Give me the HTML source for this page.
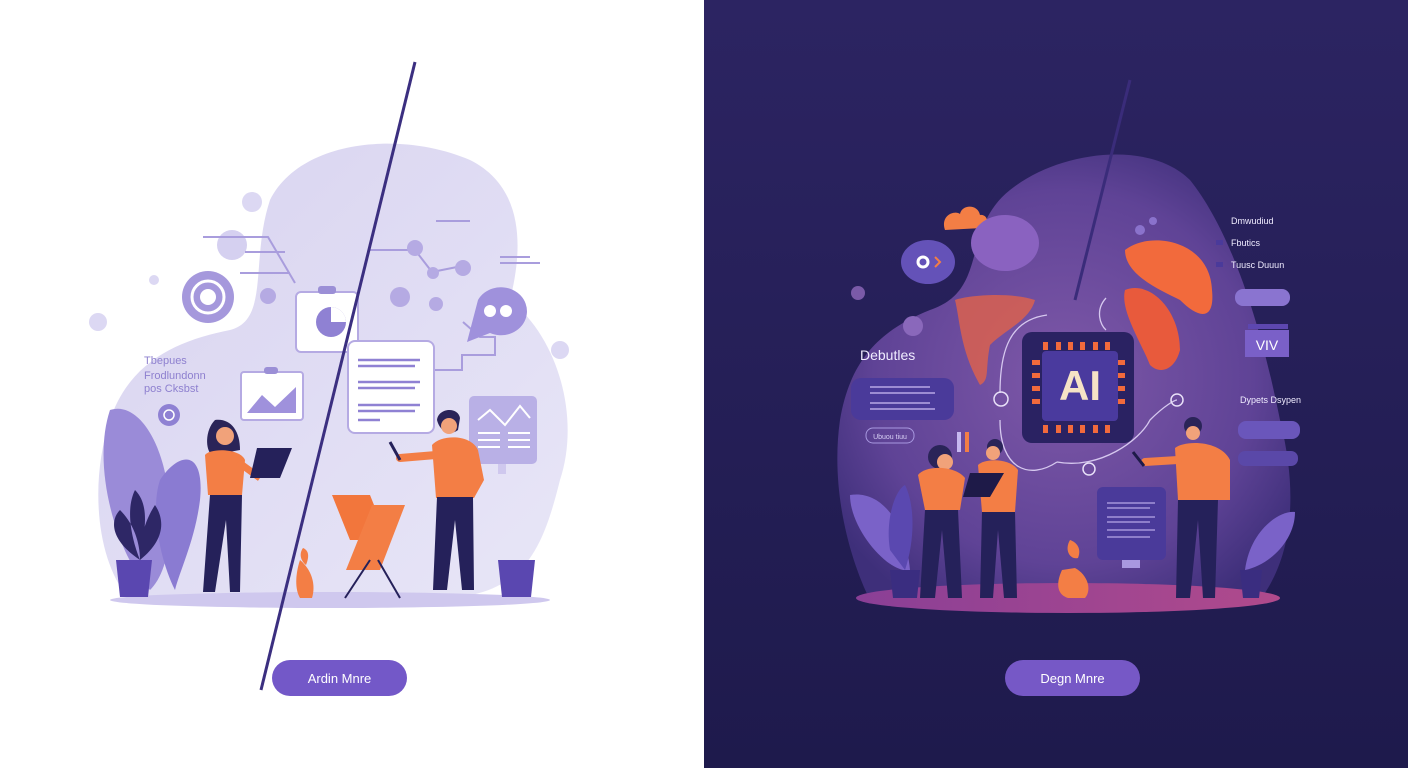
<!DOCTYPE html>
<html><head><meta charset="utf-8"><style>
html,body{margin:0;padding:0;width:1408px;height:768px;overflow:hidden;font-family:"Liberation Sans",sans-serif}
</style></head><body>
<svg width="1408" height="768" viewBox="0 0 1408 768" xmlns="http://www.w3.org/2000/svg" font-family="Liberation Sans, sans-serif">
<defs>
<linearGradient id="bgR" x1="0" y1="0" x2="0" y2="1"><stop offset="0" stop-color="#2c2462"/><stop offset="1" stop-color="#1e1a4c"/></linearGradient>
<radialGradient id="blobR" cx="0.5" cy="0.5" r="0.6"><stop offset="0" stop-color="#7e58a8"/><stop offset="0.7" stop-color="#5f4396"/><stop offset="1" stop-color="#3e2f7a"/></radialGradient>
<linearGradient id="blobL" x1="0" y1="0" x2="1" y2="1"><stop offset="0" stop-color="#d8d3f0"/><stop offset="1" stop-color="#e8e6f7"/></linearGradient>
<linearGradient id="floorR" x1="0" y1="0" x2="1" y2="0"><stop offset="0" stop-color="#8a3f96"/><stop offset="1" stop-color="#b04a8c"/></linearGradient>
</defs>
<rect width="704" height="768" fill="#ffffff"/>
<rect x="704" width="704" height="768" fill="url(#bgR)"/>

<!-- LEFT blob -->
<path d="M270 200 C300 140 400 130 470 160 C530 190 520 260 510 300 C560 340 580 420 560 480 C540 560 520 600 420 600 L130 600 C95 560 90 480 110 420 C130 360 180 340 230 330 C270 320 250 260 270 200 Z" fill="url(#blobL)"/>
<ellipse cx="330" cy="600" rx="220" ry="8" fill="#cfc8ee"/>
<circle cx="252" cy="202" r="10" fill="#dcd8f3"/><circle cx="98" cy="322" r="9" fill="#dcd8f3"/><circle cx="560" cy="350" r="9" fill="#dcd8f3"/><circle cx="154" cy="280" r="5" fill="#dcd8f3"/>
<circle cx="232" cy="245" r="15" fill="#d5d0f0"/>
<g stroke="#a99ddd" stroke-width="2" fill="none"><path d="M203 237 H268 L295 283"/><path d="M245 252 H285"/><path d="M240 273 H290"/><path d="M370 250 H415 L432 272 L462 266"/><path d="M436 221 H470"/><path d="M500 257 H530 M500 263 H540"/><path d="M463 322 L480 337 H495 V355 H462 V370 H435"/></g>
<circle cx="208" cy="297" r="26" fill="#a598dc"/><circle cx="208" cy="297" r="16" fill="none" stroke="#fff" stroke-width="3"/><circle cx="208" cy="297" r="8" fill="#fff"/>
<circle cx="268" cy="296" r="8" fill="#b5aae3"/>
<circle cx="415" cy="248" r="8" fill="#b5aae3"/><circle cx="433" cy="273" r="6" fill="#b5aae3"/><circle cx="463" cy="268" r="8" fill="#b5aae3"/><circle cx="400" cy="297" r="10" fill="#b5aae3"/><circle cx="436" cy="304" r="7" fill="#b5aae3"/>
<rect x="296" y="292" width="62" height="60" rx="5" fill="#fff" stroke="#b5aae3" stroke-width="2"/><rect x="318" y="286" width="18" height="8" rx="3" fill="#9b8fd6"/>
<circle cx="331" cy="322" r="15" fill="#8f81d3"/><path d="M331 322 V307 A15 15 0 0 1 346 322 Z" fill="#fff"/>
<path d="M478 300 A26 24 0 1 1 490 333 L467 342 Z" fill="#9f91dc"/><circle cx="490" cy="311" r="6" fill="#fff"/><circle cx="506" cy="311" r="6" fill="#fff"/>
<text x="144" y="364" font-size="11" fill="#8e80cf">Tbepues</text><text x="144" y="379" font-size="11" fill="#8e80cf">Frodlundonn</text><text x="144" y="392" font-size="11" fill="#8e80cf">pos Cksbst</text>
<circle cx="169" cy="415" r="11" fill="#8f81d3"/><circle cx="169" cy="415" r="5" fill="none" stroke="#fff" stroke-width="1.5"/>
<rect x="241" y="372" width="62" height="48" rx="3" fill="#fff" stroke="#b5aae3" stroke-width="2"/><rect x="264" y="367" width="14" height="7" rx="3" fill="#9b8fd6"/><path d="M247 413 L262 395 L275 407 L296 387 V413 Z" fill="#9f91dc"/>
<rect x="348" y="341" width="86" height="92" rx="7" fill="#fff" stroke="#b5aae3" stroke-width="2"/>
<g stroke="#8f81d3" stroke-width="2.5"><path d="M358 360 H420 M358 366 H415 M358 382 H420 M358 388 H415 M358 405 H420 M358 411 H415 M358 420 H380"/></g>
<rect x="469" y="396" width="68" height="68" rx="5" fill="#b9b0e6"/><path d="M478 420 L490 410 L505 425 L520 406 L530 418" stroke="#fff" fill="none" stroke-width="2"/><g stroke="#fff" stroke-width="2"><path d="M478 433 H500 M478 440 H500 M478 447 H500 M508 433 H530 M508 440 H530 M508 447 H530"/></g><rect x="498" y="464" width="8" height="10" fill="#cfc8ee"/>
<!-- plants left -->
<path d="M110 410 C140 400 170 450 170 520 C170 560 160 580 150 590 C120 560 90 470 110 410Z" fill="#9a8bd8"/>
<path d="M160 480 C180 450 205 450 200 500 C195 540 180 570 175 590 C160 560 150 510 160 480Z" fill="#8a7bd2"/>
<path d="M140 560 C110 540 110 520 120 510 C135 525 140 545 140 560Z M140 560 C145 530 150 505 135 490 C125 510 132 540 140 560Z M140 560 C165 540 165 520 155 505 C142 525 140 545 140 560Z" fill="#2e2766"/>
<path d="M116 560 H152 L148 597 H120 Z" fill="#5a47b0"/>
<path d="M498 560 H535 L531 597 H502 Z" fill="#5a47b0"/>
<!-- woman left -->
<path d="M215 420 C205 430 205 450 212 455 L240 450 C240 430 230 418 215 420Z" fill="#2a2458"/>
<circle cx="225" cy="436" r="9" fill="#f1a27a"/>
<path d="M205 455 C210 448 240 448 245 460 L242 495 H208 Z" fill="#f37e45"/>
<path d="M210 495 H242 L240 592 H230 L226 520 L215 592 H203 Z" fill="#25215a"/>
<path d="M238 462 L260 478" stroke="#f37e45" stroke-width="7"/>
<path d="M257 448 L292 448 L280 478 L250 478 Z" fill="#25215a"/>
<!-- man left -->
<path d="M437 420 C438 408 458 406 460 418 L458 430 C450 436 440 432 437 420Z" fill="#2a2458"/>
<circle cx="449" cy="426" r="8" fill="#f1a27a"/>
<path d="M432 445 C440 435 470 433 478 450 L484 480 L474 498 H436 Z" fill="#f37e45"/>
<path d="M436 455 L400 458" stroke="#f37e45" stroke-width="8" stroke-linecap="round"/>
<path d="M390 442 L400 460" stroke="#25215a" stroke-width="3"/>
<path d="M437 497 H473 L474 590 H462 L455 520 L447 590 H433 Z" fill="#25215a"/>
<!-- easel -->
<path d="M332 495 L370 495 L388 540 L350 540 Z" fill="#f2763c"/>
<path d="M372 505 L405 505 L380 570 L346 570 Z" fill="#f37e45"/>
<path d="M370 560 L345 598 M378 560 L400 598" stroke="#25215a" stroke-width="2"/>
<path d="M300 560 C295 575 295 590 300 598 H312 C316 585 312 570 300 560 Z" fill="#f37e45"/><path d="M303 548 C298 555 302 562 306 565 C310 555 308 550 303 548Z" fill="#f37e45"/>
<line x1="415" y1="62" x2="261" y2="690" stroke="#3b2f80" stroke-width="3"/>

<!-- RIGHT blob -->
<path d="M1010 190 C1060 150 1150 140 1190 180 C1230 230 1260 320 1280 420 C1300 500 1290 560 1260 600 L870 600 C850 560 830 490 840 420 C850 360 880 330 930 310 C990 290 960 230 1010 190 Z" fill="url(#blobR)"/>
<ellipse cx="1068" cy="598" rx="212" ry="15" fill="url(#floorR)"/>
<ellipse cx="928" cy="262" rx="27" ry="22" fill="#6452b8"/><circle cx="923" cy="262" r="5" fill="none" stroke="#fff" stroke-width="3"/><path d="M935 257 L940 262 L935 267" stroke="#f37e45" stroke-width="2" fill="none"/>
<path d="M945 230 C940 215 955 210 960 214 C962 204 978 204 980 215 C988 214 990 225 982 228 Z" fill="#f37e45"/>
<ellipse cx="1005" cy="243" rx="34" ry="28" fill="#8a62c0"/>
<circle cx="858" cy="293" r="7" fill="#7a5aa8"/><circle cx="913" cy="326" r="10" fill="#8a68bb"/><circle cx="1140" cy="230" r="5" fill="#8a72cc"/><circle cx="1153" cy="221" r="4" fill="#8a72cc"/>
<path d="M1125 250 C1150 230 1210 240 1212 290 C1215 320 1200 320 1180 300 C1160 290 1125 275 1125 250Z" fill="#f26a3c"/>
<path d="M1125 290 C1150 280 1180 310 1180 350 C1175 370 1160 375 1150 365 C1140 340 1120 310 1125 290Z" fill="#e85a3c"/>
<path d="M955 300 C970 295 1010 292 1035 300 C1030 320 1005 330 990 345 C985 370 990 380 980 385 C960 350 960 320 955 300Z" fill="#d9604f" opacity="0.85"/>
<g stroke="#d6c8ef" stroke-width="1.3" fill="none"><path d="M1047 315 C1010 320 1000 350 1000 393"/><path d="M1000 420 C1000 470 1030 480 1057 462"/><path d="M1057 462 C1100 470 1140 440 1150 420 C1165 405 1175 400 1177 400"/><path d="M1106 298 C1095 310 1100 325 1106 330"/></g>
<circle cx="1001" cy="399" r="7" fill="none" stroke="#e8e0f8" stroke-width="1.5"/><circle cx="1177" cy="400" r="6" fill="none" stroke="#e8e0f8" stroke-width="1.5"/><circle cx="1089" cy="469" r="6" fill="none" stroke="#e8e0f8" stroke-width="1.5"/>
<rect x="1022" y="332" width="112" height="111" rx="10" fill="#2a2262"/>
<g fill="#f26a3c"><rect x="1043" y="342" width="5" height="8"/><rect x="1056" y="342" width="5" height="8"/><rect x="1068" y="342" width="5" height="8"/><rect x="1080" y="342" width="5" height="8"/><rect x="1093" y="342" width="5" height="8"/><rect x="1105" y="342" width="5" height="8"/>
<rect x="1043" y="425" width="5" height="8"/><rect x="1056" y="425" width="5" height="8"/><rect x="1068" y="425" width="5" height="8"/><rect x="1080" y="425" width="5" height="8"/><rect x="1093" y="425" width="5" height="8"/><rect x="1105" y="425" width="5" height="8"/>
<rect x="1032" y="360" width="8" height="5"/><rect x="1032" y="373" width="8" height="5"/><rect x="1032" y="386" width="8" height="5"/><rect x="1032" y="399" width="8" height="5"/><rect x="1117" y="360" width="8" height="5"/><rect x="1117" y="373" width="8" height="5"/><rect x="1117" y="386" width="8" height="5"/><rect x="1117" y="399" width="8" height="5"/></g>
<rect x="1042" y="351" width="76" height="70" rx="4" fill="#4a3a9e"/>
<text x="1080" y="400" font-size="42" font-weight="bold" fill="#f6e3c6" text-anchor="middle">AI</text>
<text x="860" y="360" font-size="14" fill="#f0ecff">Debutles</text>
<rect x="851" y="378" width="103" height="42" rx="10" fill="#4a3a9a"/>
<g stroke="#b8a8e6" stroke-width="1.5"><path d="M870 387 H930 M870 393 H935 M870 403 H930 M870 409 H935"/></g>
<rect x="866" y="428" width="48" height="15" rx="7" fill="none" stroke="#a898e0"/><text x="890" y="439" font-size="7" fill="#d8d0f5" text-anchor="middle">Ubuou tiuu</text>
<text x="1231" y="224" font-size="9" fill="#f0ecff">Dmwudiud</text>
<rect x="1216" y="240" width="7" height="5" fill="#4a3a9a"/><text x="1231" y="246" font-size="9" fill="#f0ecff">Fbutics</text>
<rect x="1216" y="262" width="7" height="5" fill="#4a3a9a"/><text x="1231" y="268" font-size="9" fill="#f0ecff">Tuusc Duuun</text>
<rect x="1235" y="289" width="55" height="17" rx="8" fill="#8a74d0"/>
<rect x="1248" y="324" width="40" height="5" fill="#5d47b0"/><rect x="1245" y="330" width="44" height="27" fill="#7a60c8"/><text x="1267" y="350" font-size="14" fill="#fff" text-anchor="middle">VIV</text>
<text x="1240" y="403" font-size="9" fill="#f0ecff">Dypets Dsypen</text>
<rect x="1238" y="421" width="62" height="18" rx="8" fill="#6a56bb"/><rect x="1238" y="451" width="60" height="15" rx="7" fill="#5a48a8"/>
<rect x="1097" y="487" width="69" height="73" rx="6" fill="#4a3a9a"/>
<g stroke="#b8a8e6" stroke-width="1.3"><path d="M1107 503 H1155 M1107 508 H1150 M1107 517 H1155 M1107 522 H1150 M1107 530 H1155 M1107 537 H1150"/></g>
<rect x="1122" y="560" width="18" height="8" fill="#a898e0"/>
<!-- plants right -->
<path d="M850 495 C880 490 905 520 910 570 C890 575 850 530 850 495Z" fill="#7a62c8"/>
<path d="M890 550 C885 520 895 490 905 485 C915 505 915 540 905 570Z" fill="#5a48b0"/>
<path d="M890 570 H920 L917 598 H893 Z" fill="#3a2d80"/>
<path d="M1295 512 C1280 510 1250 530 1245 570 C1270 565 1295 540 1295 512Z" fill="#7a62c8"/>
<path d="M1240 570 H1262 L1259 598 H1243 Z" fill="#3a2d80"/>
<!-- people right -->
<circle cx="940" cy="457" r="12" fill="#2a2458"/><circle cx="945" cy="462" r="8" fill="#f1a27a"/>
<path d="M918 475 C925 465 955 465 965 478 L960 510 H925 Z" fill="#f37e45"/>
<path d="M925 510 H958 L962 598 H948 L942 530 L935 598 H920 Z" fill="#25215a"/>
<circle cx="995" cy="447" r="8" fill="#2a2458"/><circle cx="993" cy="453" r="7" fill="#f1a27a"/>
<path d="M978 465 C985 458 1010 458 1018 470 L1015 512 H982 Z" fill="#f37e45"/>
<path d="M982 512 H1015 L1017 598 H1004 L998 530 L993 598 H980 Z" fill="#25215a"/>
<path d="M970 473 L1004 473 L990 497 L963 497Z" fill="#1e1a48"/>
<circle cx="1193" cy="426" r="9" fill="#2a2458"/><circle cx="1193" cy="433" r="7" fill="#f1a27a"/>
<path d="M1175 448 C1185 440 1220 440 1230 460 L1230 500 H1178 Z" fill="#f37e45"/>
<path d="M1178 460 L1145 462" stroke="#f37e45" stroke-width="8" stroke-linecap="round"/>
<path d="M1133 452 L1144 466" stroke="#1e1a48" stroke-width="3"/>
<path d="M1178 500 H1218 L1215 598 H1203 L1198 520 L1190 598 H1176 Z" fill="#25215a"/>
<path d="M1062 570 C1055 585 1058 595 1068 598 H1085 C1092 590 1088 575 1075 568Z" fill="#f37e45"/><path d="M1070 540 C1064 550 1070 560 1078 558 C1082 548 1076 542 1070 540Z" fill="#f37e45"/>
<rect x="957" y="432" width="4" height="20" fill="#c7b8f0"/><rect x="965" y="432" width="4" height="20" fill="#f37e45"/>
<line x1="1130" y1="80" x2="1075" y2="300" stroke="#3a2c7a" stroke-width="3"/>

<!-- buttons -->
<rect x="272" y="660" width="135" height="36" rx="18" fill="#7358c8"/>
<text x="339.5" y="683" font-size="13" fill="#fff" text-anchor="middle">Ardin Mnre</text>
<rect x="1005" y="660" width="135" height="36" rx="18" fill="#7658c6"/>
<text x="1072.5" y="683" font-size="13" fill="#fff" text-anchor="middle">Degn Mnre</text>
</svg>
</body></html>
